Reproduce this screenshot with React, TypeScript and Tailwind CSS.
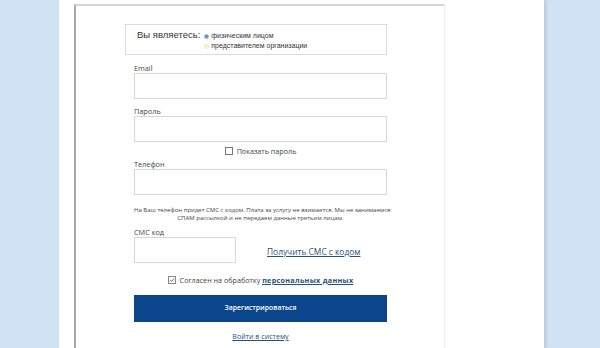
import React from "react";

const font = { fontFamily: '"Open Sans", "Noto Sans", sans-serif' };

function Label({ children, top }: { children: React.ReactNode; top: string }) {
  return (
    <div className={`text-[7.3px] leading-[10px] text-[#444] ${top}`}>{children}</div>
  );
}

function Input({ w = "w-full" }: { w?: string }) {
  return <div className={`${w} h-[26px] border border-[#d6d6d6] bg-white`} />;
}

export default function App() {
  return (
    <div className="w-[600px] h-[348px] overflow-hidden flex bg-[#cfe3f4]" style={font}>
      <div className="w-[59px] shrink-0" />
      <div className="w-[485px] shrink-0 bg-white shadow-[2px_0_3px_rgba(120,150,180,0.35)]">
        <div className="ml-[15px] mt-[4px] w-[371px] h-[400px] border-l-2 border-l-[#a9a9a9] border-t-2 border-t-[#d4d4d4] border-r border-r-[#f0f0f0]">
          <div className="ml-[49px] pt-[18px] w-[262px]">
            <div className="h-[31px] border border-[#dcdcdc] flex items-start pt-[4px] pl-[11px]">
              <div className="text-[9.5px] leading-[12px] text-[#333] mr-[4px]" style={{ fontFamily: '"Liberation Sans", sans-serif' }}>
                Вы являетесь:
              </div>
              <div className="flex flex-col text-[7px] leading-[10px] text-[#333] pt-[2px]" style={{ fontFamily: '"Liberation Sans", sans-serif' }}>
                <div className="flex items-center">
                  <span className="w-[5px] h-[5px] rounded-full bg-[#5b8fc7] border border-[#9bbbe0] mr-[2px]" />
                  физическим лицом
                </div>
                <div className="flex items-center">
                  <span className="w-[5px] h-[5px] rounded-full bg-[#fff7d6] border border-[#f0e6b0] mr-[2px]" />
                  представителем организации
                </div>
              </div>
            </div>
          </div>
          <div className="ml-[58px] w-[253px]">
            <Label top="mt-[8px]">Email</Label>
            <Input />
            <Label top="mt-[7px]">Пароль</Label>
            <Input />
            <div className="flex items-center justify-center mt-[4px] h-[10px] text-[7.2px] text-[#444]">
              <span className="w-[8px] h-[8px] border border-[#777] bg-white mr-[4px]" />
              Показать пароль
            </div>
            <Label top="mt-[3px]">Телефон</Label>
            <Input />
            <div className="mt-[11px] text-[6px] leading-[8px] text-[#444] text-center whitespace-nowrap">
              <div>На Ваш телефон придет СМС с кодом. Плата за услугу не взимается. Мы не занимаемся</div>
              <div>СПАМ рассылкой и не передаем данные третьим лицам.</div>
            </div>
            <Label top="mt-[5px]">СМС код</Label>
            <div className="flex items-center">
              <Input w="w-[102px]" />
              <a className="ml-[31px] mt-[4px] text-[8.4px] text-[#2a4f7c] underline">Получить СМС с кодом</a>
            </div>
            <div className="flex items-center justify-center mt-[12px] h-[10px] text-[7.2px] text-[#444]">
              <span className="w-[8px] h-[8px] border border-[#888] bg-white mr-[4px] flex items-center justify-center">
                <svg width="6" height="6" viewBox="0 0 6 6"><path d="M1 3.2 L2.4 4.6 L5 1.5" stroke="#555" strokeWidth="0.9" fill="none" /></svg>
              </span>
              Согласен на обработку&nbsp;
              <a className="font-bold text-[#2a4f7c] underline tracking-[0.3px]">персональных данных</a>
            </div>
            <button className="mt-[10px] w-full h-[27px] bg-[#0b468c] text-white text-[6.9px] font-semibold">
              Зарегистрироваться
            </button>
            <div className="mt-[9px] text-center text-[7.1px] leading-[10px]">
              <a className="text-[#2a4f7c] underline">Войти в систему</a>
            </div>
          </div>
        </div>
      </div>
      <div className="flex-1" />
    </div>
  );
}
